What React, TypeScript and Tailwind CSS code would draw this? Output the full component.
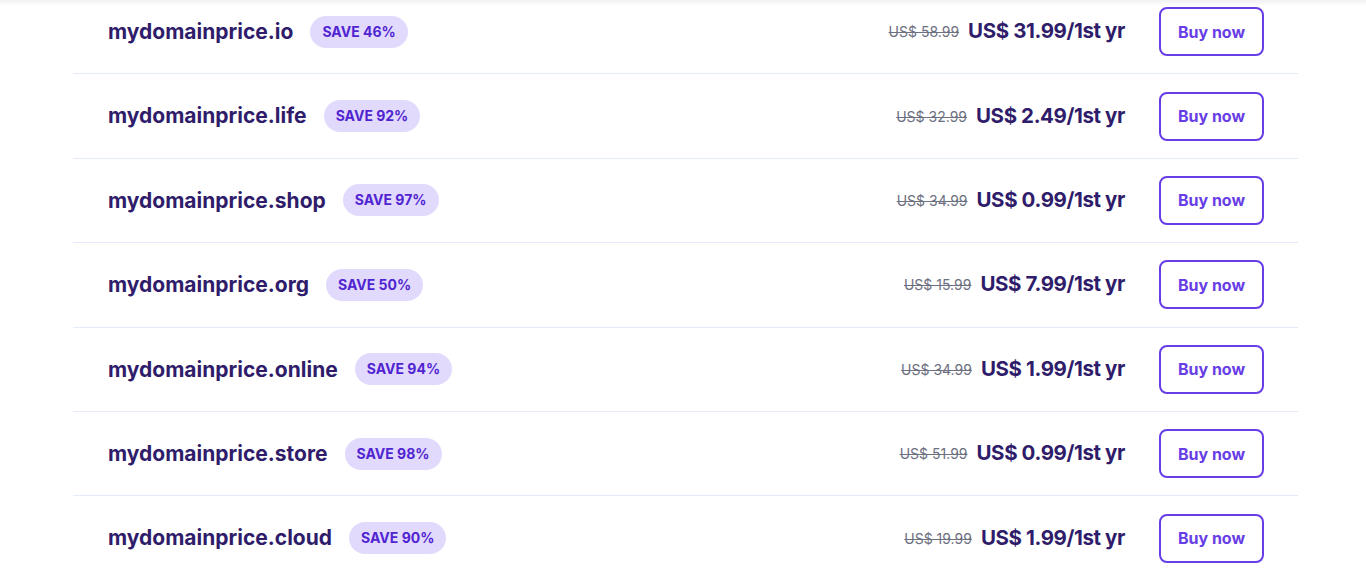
import React from "react";

type Domain = {
  name: string;
  save: string;
  oldPrice: string;
  price: string;
};

const domains: Domain[] = [
  { name: "mydomainprice.io", save: "SAVE 46%", oldPrice: "US$ 58.99", price: "US$ 31.99/1st yr" },
  { name: "mydomainprice.life", save: "SAVE 92%", oldPrice: "US$ 32.99", price: "US$ 2.49/1st yr" },
  { name: "mydomainprice.shop", save: "SAVE 97%", oldPrice: "US$ 34.99", price: "US$ 0.99/1st yr" },
  { name: "mydomainprice.org", save: "SAVE 50%", oldPrice: "US$ 15.99", price: "US$ 7.99/1st yr" },
  { name: "mydomainprice.online", save: "SAVE 94%", oldPrice: "US$ 34.99", price: "US$ 1.99/1st yr" },
  { name: "mydomainprice.store", save: "SAVE 98%", oldPrice: "US$ 51.99", price: "US$ 0.99/1st yr" },
  { name: "mydomainprice.cloud", save: "SAVE 90%", oldPrice: "US$ 19.99", price: "US$ 1.99/1st yr" },
];

export default function App() {
  return (
    <div className="relative h-[572px] w-[1366px] overflow-hidden bg-white font-['Inter',sans-serif]">
      <div className="pointer-events-none absolute inset-x-0 top-0 h-[6px] bg-gradient-to-b from-[#f1f1f4] to-white" />
      <div className="-mt-[10px] ml-[73px] w-[1225px]">
        {domains.map((d) => (
          <div
            key={d.name}
            className="flex h-[84.4px] items-center justify-between border-b border-[#e4e9fc] pl-[35px] pr-[34px]"
          >
            <div className="flex items-center gap-[17px]">
              <span className="text-[21px] font-bold text-[#2f1c6a]">{d.name}</span>
              <span className="rounded-full bg-[#e2dafc] px-[12px] py-[6px] text-[14px] font-bold leading-[20px] text-[#5025d1]">
                {d.save}
              </span>
            </div>
            <div className="flex items-center">
              <span className="text-[14px] text-[#6d7081] line-through">{d.oldPrice}</span>
              <span className="ml-[9px] text-[20.5px] font-bold tracking-[-0.4px] text-[#2f1c6a]">{d.price}</span>
              <button className="ml-[34px] h-[49px] w-[105px] rounded-[8px] border-2 border-[#673de6] text-[16px] font-bold text-[#673de6]">
                Buy now
              </button>
            </div>
          </div>
        ))}
      </div>
    </div>
  );
}
